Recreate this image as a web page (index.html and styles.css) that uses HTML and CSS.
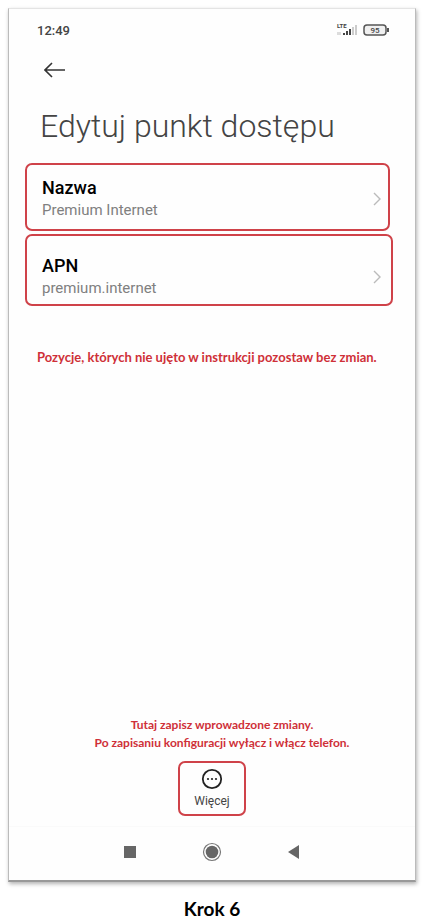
FILE: index.html
```html
<!DOCTYPE html>
<html lang="pl">

<head>
    <meta charset="UTF-8">
    <meta name="viewport" content="width=device-width, initial-scale=1.0">
    <title>Edytuj punkt dostępu</title>
    <link rel="stylesheet" href="styles.css">
</head>

<body>
    <figure class="step">
        <div class="phone">
            <div class="status-bar">
                <span class="time">12:49</span>
                <svg class="status-icons" width="54" height="16" viewBox="0 0 54 16" role="img" aria-label="LTE, bateria 95%">
                    <text class="lte" x="1" y="6">LTE</text>
                    <path d="M2 10v3M4 10v3" stroke="#bbb" stroke-width="1" />
                    <path d="M8 13v-2M11 13v-4M14 13V7" stroke="#444" stroke-width="2" />
                    <path d="M17 13V5M20 13V3" stroke="#ccc" stroke-width="2" />
                    <rect x="28" y="3" width="22" height="10" rx="3" fill="#f0f0f0" stroke="#555" stroke-width="1.5" />
                    <path d="M52 6v4" stroke="#555" stroke-width="2" />
                    <text class="battery" x="39" y="11">95</text>
                </svg>
            </div>

            <button class="back" aria-label="Wstecz">
                <svg width="22" height="16" viewBox="0 0 22 16">
                    <path d="M8 1L1 8l7 7M1 8h20" fill="none" stroke="#333" stroke-width="1.6" />
                </svg>
            </button>

            <h1>Edytuj punkt dostępu</h1>

            <div class="settings">
                <button class="setting">
                    <span class="setting-text">
                        <span class="name">Nazwa</span>
                        <span class="value">Premium Internet</span>
                    </span>
                    <svg width="8" height="14" viewBox="0 0 8 14">
                        <path d="M1 1l6 6-6 6" fill="none" stroke="#bbb" stroke-width="1.4" />
                    </svg>
                </button>
                <button class="setting setting-apn">
                    <span class="setting-text">
                        <span class="name">APN</span>
                        <span class="value">premium.internet</span>
                    </span>
                    <svg width="8" height="14" viewBox="0 0 8 14">
                        <path d="M1 1l6 6-6 6" fill="none" stroke="#bbb" stroke-width="1.4" />
                    </svg>
                </button>
            </div>

            <p class="note">Pozycje, których nie ujęto w instrukcji pozostaw bez zmian.</p>

            <div class="save">
                <p class="note save-note">Tutaj zapisz wprowadzone zmiany.<br>Po zapisaniu konfiguracji wyłącz i włącz telefon.</p>
                <button class="more">
                    <svg width="22" height="22" viewBox="0 0 22 22">
                        <circle cx="11" cy="11" r="9.2" fill="none" stroke="#222" stroke-width="1.8" />
                        <circle cx="7" cy="11" r="1.1" fill="#222" />
                        <circle cx="11" cy="11" r="1.1" fill="#222" />
                        <circle cx="15" cy="11" r="1.1" fill="#222" />
                    </svg>
                    <span>Więcej</span>
                </button>
            </div>

            <nav class="nav-bar">
                <button aria-label="Ostatnie aplikacje">
                    <svg width="20" height="20" viewBox="0 0 20 20">
                        <rect x="4" y="4" width="12" height="12" fill="#666" />
                    </svg>
                </button>
                <button aria-label="Ekran główny">
                    <svg width="20" height="20" viewBox="0 0 20 20">
                        <circle cx="10" cy="10" r="8.5" fill="none" stroke="#777" stroke-width="1.2" />
                        <circle cx="10" cy="10" r="6.3" fill="#666" />
                    </svg>
                </button>
                <button aria-label="Cofnij">
                    <svg width="20" height="20" viewBox="0 0 20 20">
                        <path d="M4 10l11-7v14z" fill="#666" />
                    </svg>
                </button>
            </nav>
        </div>
        <figcaption>Krok 6</figcaption>
    </figure>
</body>

</html>
```

FILE: styles.css
```css
* {
    box-sizing: border-box;
}

body {
    margin: 0;
    background-color: #fff;
    font-family: Roboto, sans-serif;
    color: #000;
}

button {
    padding: 0;
    border: none;
    background: none;
    font-family: inherit;
    color: inherit;
    cursor: pointer;
}

svg {
    display: block;
    flex-shrink: 0;
}

.step {
    display: flex;
    flex-direction: column;
    min-height: 100vh;
    margin: 0;
    padding: 8px 10px 0 8px;
}

.phone {
    flex: 1;
    display: flex;
    flex-direction: column;
    background-color: #fefefe;
    border: 1px solid #bbb;
    border-top-color: #e4e4e4;
    border-bottom: 2px solid #999;
    box-shadow: 1px 2px 4px rgba(0, 0, 0, 0.3);
}

.status-bar {
    display: flex;
    justify-content: space-between;
    align-items: center;
    height: 42px;
    padding: 0 25px 0 28px;
}

.time {
    font-size: 13px;
    font-weight: 500;
    color: #444;
}

.lte {
    font-size: 6px;
    font-weight: 700;
    fill: #444;
}

.battery {
    font-size: 8px;
    font-weight: 500;
    text-anchor: middle;
    fill: #444;
}

.back {
    align-self: flex-start;
    margin: 11px 0 0 35px;
}

h1 {
    margin: 28px 0 0 31px;
    font-size: 32px;
    line-height: 40px;
    font-weight: 300;
    color: #444;
}

.settings {
    display: flex;
    flex-direction: column;
    gap: 3px;
    margin-top: 17px;
    padding: 0 22px 0 16px;
}

.setting {
    display: flex;
    justify-content: space-between;
    align-items: center;
    margin-right: 3px;
    padding: 12px 7px 8px 15px;
    border: 2px solid #cf4249;
    border-radius: 7px;
    text-align: left;
}

.setting-apn {
    margin-right: 0;
    padding: 19px 10px 5px 15px;
}

.setting-text {
    display: flex;
    flex-direction: column;
}

.name {
    font-size: 18px;
    line-height: 22px;
    font-weight: 500;
}

.value {
    font-size: 15px;
    line-height: 22px;
    color: #808080;
}

.note {
    margin: 42px 0 0 28px;
    font-family: Lato, sans-serif;
    font-size: 13px;
    line-height: 18px;
    font-weight: 700;
    color: #cf3038;
}

.save {
    display: flex;
    flex-direction: column;
    align-items: center;
    margin-top: auto;
}

.save-note {
    margin: 0 0 9px 20px;
    font-size: 12px;
    text-align: center;
}

.more {
    display: flex;
    flex-direction: column;
    align-items: center;
    gap: 4px;
    padding: 5px 14px 6px;
    border: 2px solid #cf4249;
    border-radius: 7px;
    font-size: 12px;
    line-height: 14px;
    color: #444;
}

.nav-bar {
    display: flex;
    justify-content: center;
    gap: 62px;
    margin-top: 10px;
    padding: 15px 0 18px;
    border-top: 1px solid #fafafa;
}

figcaption {
    padding: 15px 0 3px;
    font-family: Lato, sans-serif;
    font-size: 19px;
    line-height: 24px;
    font-weight: 700;
    text-align: center;
}
```
